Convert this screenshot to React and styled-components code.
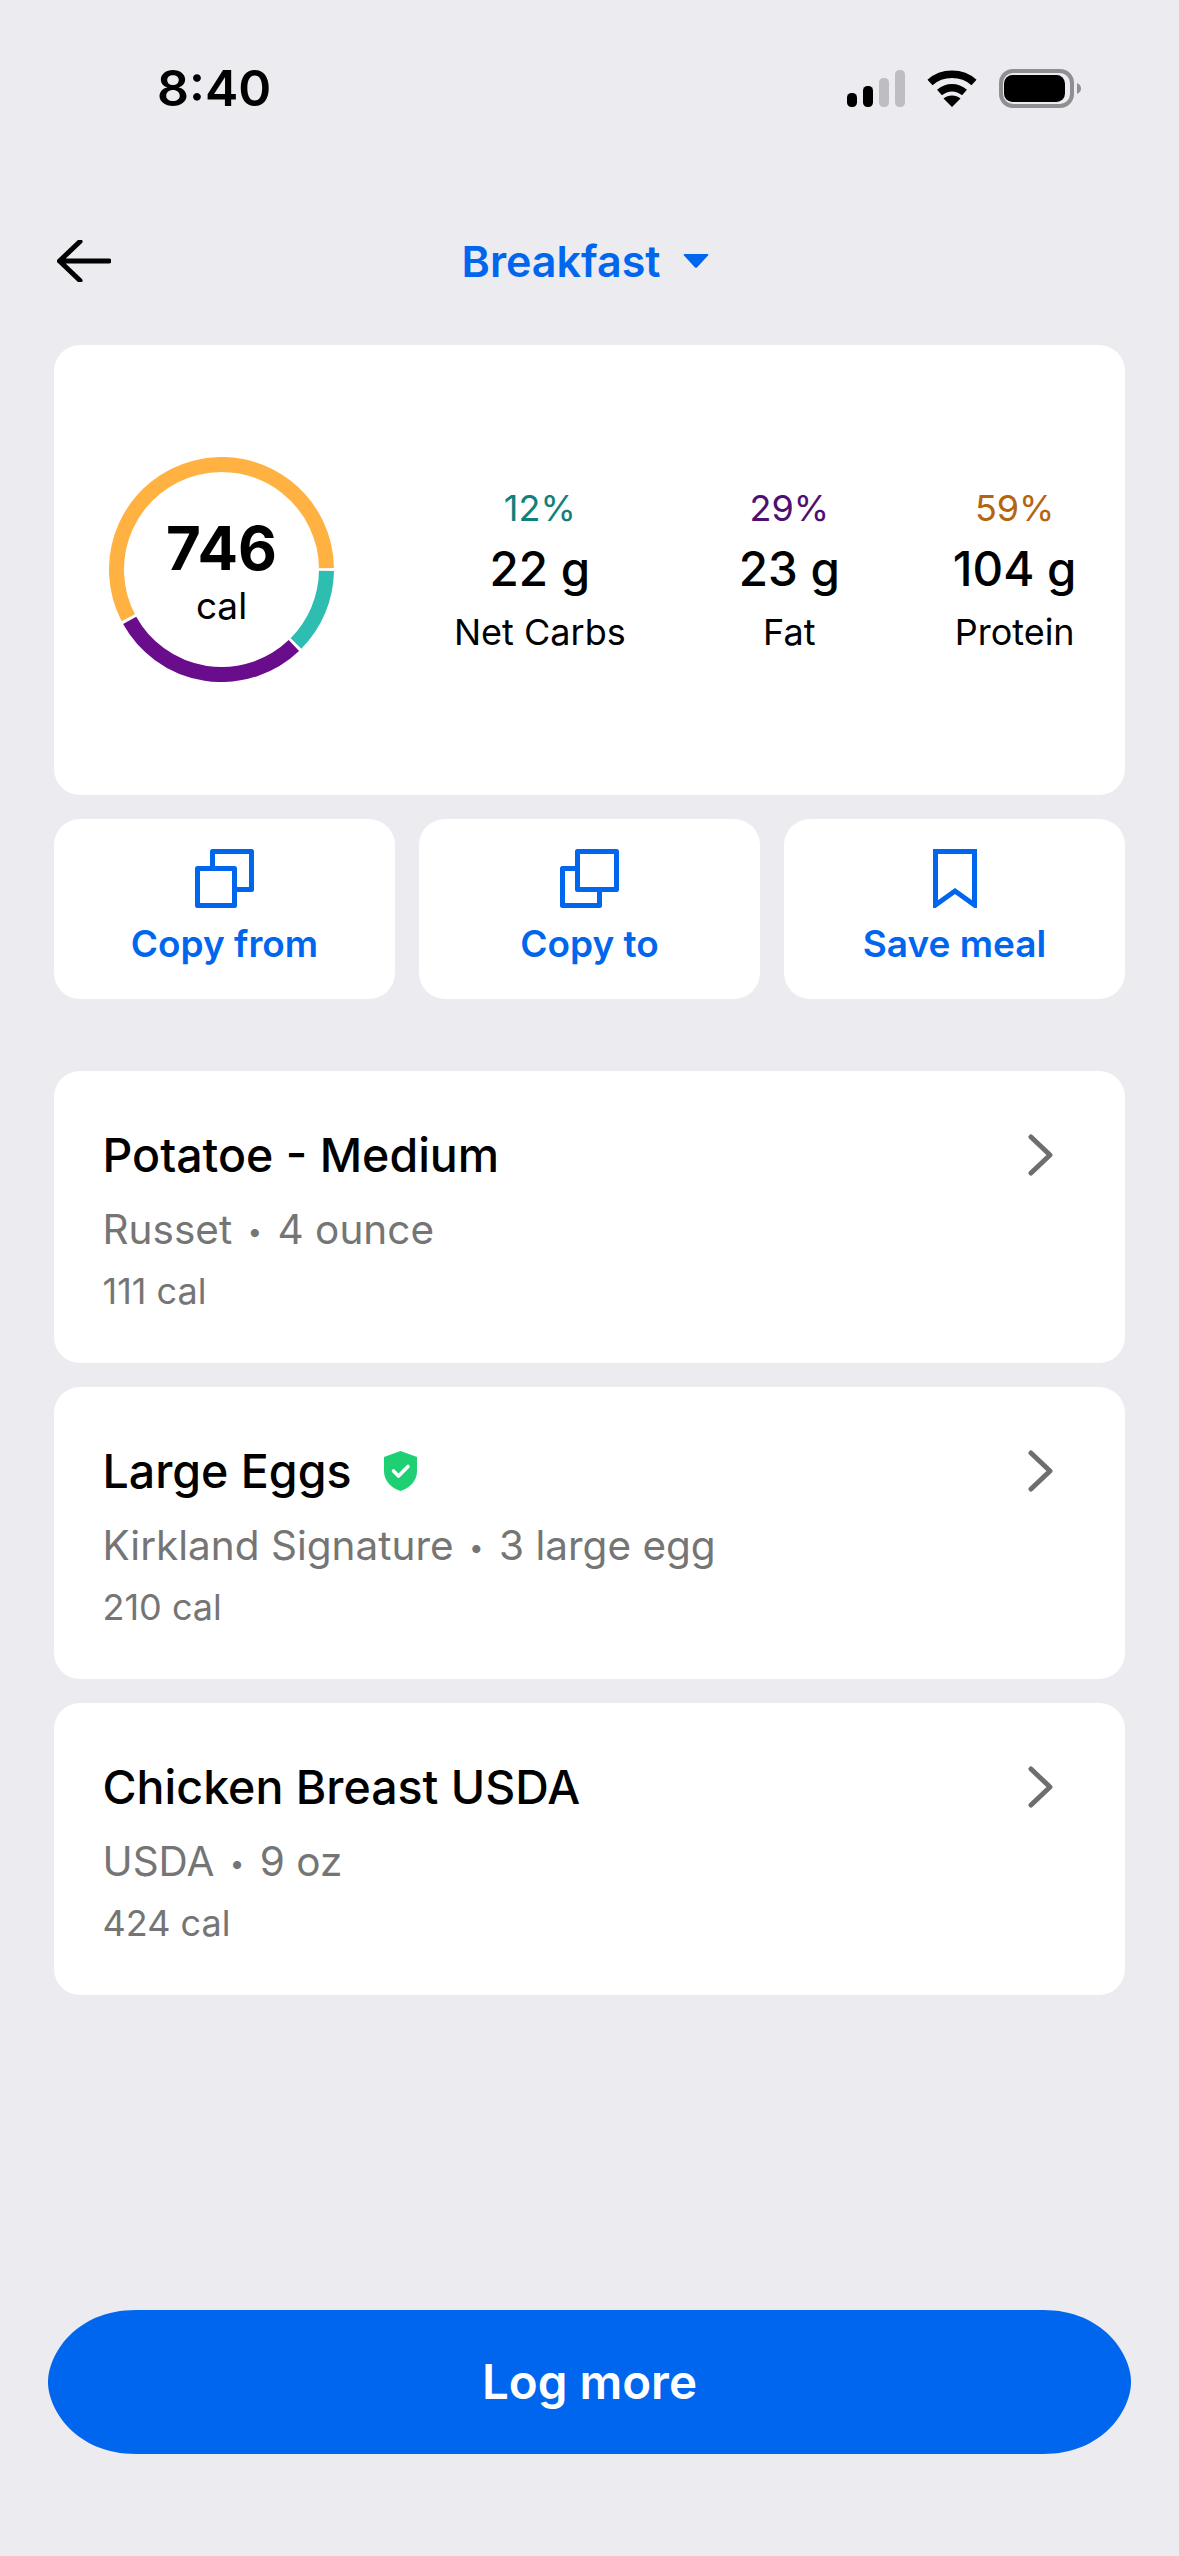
import React from "react";
import styled, { createGlobalStyle } from "styled-components";

const GlobalStyle = createGlobalStyle`
  html, body {
    margin: 0;
    padding: 0;
    background: #ebebf0;
  }
  * {
    box-sizing: border-box;
  }
`;

const Page = styled.div`
  width: 1179px;
  height: 2556px;
  display: flex;
  flex-direction: column;
  background: #ebebf0;
  color: #000;
  font-family: Inter, "Liberation Sans", sans-serif;
  overflow: hidden;
`;

const StatusBar = styled.div`
  display: flex;
  justify-content: space-between;
  align-items: center;
  height: 60px;
  margin-top: 58px;
  padding: 0 98px 0 157px;
`;

const Time = styled.div`
  font-size: 50px;
  line-height: 60px;
  font-weight: 600;
`;

const StatusIcons = styled.div`
  display: flex;
  align-items: center;
  gap: 22px;
`;

const Header = styled.header`
  display: grid;
  grid-template-columns: 1fr auto 1fr;
  align-items: center;
  height: 60px;
  margin-top: 113px;
  padding: 0 65px 0 57px;
`;

const HeaderTitle = styled.div`
  display: flex;
  align-items: center;
  gap: 23px;
  color: #0066ee;
  font-size: 43px;
  line-height: 60px;
  font-weight: 600;
`;

const Content = styled.main`
  display: flex;
  flex-direction: column;
  padding: 0 54px;
  margin-top: 54px;
`;

const SummaryCard = styled.section`
  display: flex;
  align-items: center;
  gap: 120px;
  height: 450px;
  padding-left: 55px;
  background: #fff;
  border-radius: 26px;
`;

const Ring = styled.div`
  display: grid;
  flex: none;
  width: 225px;
  height: 225px;
  margin-bottom: 1px;
  & > * {
    grid-area: 1 / 1;
  }
`;

const RingLabel = styled.div`
  display: flex;
  flex-direction: column;
  align-items: center;
  justify-content: center;
  padding-top: 2px;
`;

const Calories = styled.div`
  font-size: 60px;
  line-height: 66px;
  font-weight: 700;
`;

const CaloriesUnit = styled.div`
  font-size: 37px;
  line-height: 42px;
  margin-top: 4px;
`;

const Macros = styled.div`
  display: flex;
  gap: 113px;
  margin-bottom: 1px;
`;

const Macro = styled.div`
  display: flex;
  flex-direction: column;
  align-items: center;
`;

const MacroPercent = styled.div`
  font-size: 36px;
  line-height: 44px;
  color: ${(p) => p.$color};
`;

const MacroAmount = styled.div`
  font-size: 47.5px;
  line-height: 56px;
  font-weight: 500;
  margin-top: 11px;
  white-space: nowrap;
`;

const MacroName = styled.div`
  font-size: 36px;
  line-height: 42px;
  margin-top: 14px;
  white-space: nowrap;
`;

const Actions = styled.div`
  display: grid;
  grid-template-columns: repeat(3, 1fr);
  gap: 24px;
  margin-top: 24px;
`;

const ActionButton = styled.div`
  display: flex;
  flex-direction: column;
  align-items: center;
  height: 180px;
  padding-top: 30px;
  background: #fff;
  border-radius: 26px;
`;

const ActionLabel = styled.div`
  margin-top: 14px;
  color: #0066ee;
  font-size: 37px;
  line-height: 44px;
  font-weight: 600;
`;

const FoodList = styled.div`
  display: flex;
  flex-direction: column;
  gap: 24px;
  margin-top: 72px;
`;

const FoodCard = styled.article`
  display: flex;
  justify-content: space-between;
  align-items: flex-start;
  padding: 56px 72px 51px 48.5px;
  background: #fff;
  border-radius: 26px;
`;

const FoodBody = styled.div`
  display: flex;
  flex-direction: column;
`;

const FoodTitle = styled.div`
  display: flex;
  align-items: center;
  gap: 32px;
  font-size: 46.5px;
  line-height: 56px;
  font-weight: 500;
`;

const FoodMeta = styled.div`
  margin-top: 24px;
  color: #757575;
  font-size: 40.5px;
  line-height: 46px;
`;

const MetaDot = styled.span`
  font-size: 26px;
  line-height: 0;
  margin: 0 4px;
  vertical-align: 3px;
`;

const FoodCalories = styled.div`
  margin-top: 17px;
  color: #757575;
  font-size: 36px;
  line-height: 42px;
`;

const Chevron = styled.svg`
  flex: none;
  margin-top: 7px;
`;

const Footer = styled.footer`
  margin-top: auto;
  padding: 0 48px 102px;
`;

const LogButton = styled.div`
  display: flex;
  align-items: center;
  justify-content: center;
  height: 144px;
  padding-bottom: 2px;
  background: #0066ee;
  clip-path: path("M88 0 H995 C1055 0 1083 44 1083 72 C1083 100 1055 144 995 144 H88 C28 144 0 100 0 72 C0 44 28 0 88 0 Z");
  color: #fff;
  font-size: 47.5px;
  font-weight: 600;
`;

const SignalIcon = () => (
  <svg width="58" height="37" viewBox="0 0 58 37">
    <rect x="0" y="23" width="10" height="14" rx="4.5" fill="#000" />
    <rect x="16" y="16" width="10" height="21" rx="4.5" fill="#000" />
    <rect x="32" y="8" width="10" height="29" rx="4.5" fill="#bdbdc2" />
    <rect x="48" y="0" width="10" height="37" rx="4.5" fill="#bdbdc2" />
  </svg>
);

const WifiIcon = () => (
  <svg width="50" height="37" viewBox="0 0 50 37">
    <path d="M3 12.5 C15 1.5 35 1.5 47 12.5" fill="none" stroke="#000" strokeWidth="7.5" />
    <path d="M12.5 22.5 C20 16 30 16 37.5 22.5" fill="none" stroke="#000" strokeWidth="7.5" />
    <path d="M16.5 28.5 C21 24.5 29 24.5 33.5 28.5 L25 37 Z" fill="#000" />
  </svg>
);

const BatteryIcon = () => (
  <svg width="82" height="39" viewBox="0 0 82 39">
    <rect x="2" y="2" width="71" height="35" rx="12" fill="none" stroke="#8e8e93" strokeWidth="4" />
    <rect x="5" y="6" width="61" height="27" rx="8.5" fill="#000" />
    <path d="M78 14 C81 15.5 82 17.5 82 19.5 C82 21.5 81 23.5 78 25 Z" fill="#8e8e93" />
  </svg>
);

const BackArrow = () => (
  <svg width="54" height="42" viewBox="0 0 54 42">
    <path d="M23 1.5 L2.5 21 L23 40.5 M2.5 21 H52" fill="none" stroke="#000" strokeWidth="5" strokeLinecap="round" strokeLinejoin="round" />
  </svg>
);

const Caret = () => (
  <svg width="26" height="14" viewBox="0 0 26 14">
    <path d="M1.5 0 H24.5 Q26 0 25 1.5 L14.2 13.2 Q13 14.4 11.8 13.2 L1 1.5 Q0 0 1.5 0 Z" fill="#0066ee" />
  </svg>
);

const polar = (deg, r) => {
  const a = ((deg - 90) * Math.PI) / 180;
  return [112.5 + r * Math.cos(a), 112.5 + r * Math.sin(a)];
};

const arcPath = (from, to, r) => {
  const [x1, y1] = polar(from, r);
  const [x2, y2] = polar(to, r);
  return `M${x1} ${y1} A${r} ${r} 0 ${to - from > 180 ? 1 : 0} 1 ${x2} ${y2}`;
};

const ringSegments = [
  { from: 90.8, to: 134.8, color: "#2dbdb1" },
  { from: 136.4, to: 241, color: "#6a0d8c" },
  { from: 242.6, to: 449.2, color: "#ffb142" },
];

const MacroRing = () => (
  <svg width="225" height="225" viewBox="0 0 225 225">
    {ringSegments.map((s) => (
      <path key={s.color} d={arcPath(s.from, s.to, 105)} fill="none" stroke={s.color} strokeWidth="15" />
    ))}
  </svg>
);

const CopyIcon = ({ front }) => (
  <svg width="59" height="59" viewBox="0 0 59 59" fill="none" stroke="#0066ee" strokeWidth="5" strokeLinejoin="round">
    {front === "back" ? (
      <>
        <rect x="2.5" y="19.5" width="37" height="37" fill="none" />
        <rect x="17.5" y="2.5" width="39" height="38" fill="#fff" />
      </>
    ) : (
      <>
        <rect x="17.5" y="2.5" width="39" height="38" fill="none" />
        <rect x="2.5" y="19.5" width="37" height="37" fill="#fff" />
      </>
    )}
  </svg>
);

const BookmarkIcon = () => (
  <svg width="44" height="59" viewBox="0 0 44 59">
    <path d="M2.5 2.5 H41.5 V56 L22 42 L2.5 56 Z" fill="none" stroke="#0066ee" strokeWidth="5" strokeLinejoin="miter" />
  </svg>
);

const VerifiedShield = () => (
  <svg width="33" height="40" viewBox="0 0 33 40">
    <path d="M16.5 0 L33 6 V20 C33 31 25 37 16.5 40 C8 37 0 31 0 20 V6 Z" fill="#1fcf73" />
    <path d="M9.5 20 L14.5 25 L24 15.5" fill="none" stroke="#fff" strokeWidth="3.6" strokeLinecap="round" strokeLinejoin="round" />
  </svg>
);

const macros = [
  { percent: "12%", color: "#12807a", amount: "22 g", name: "Net Carbs" },
  { percent: "29%", color: "#4e0f70", amount: "23 g", name: "Fat" },
  { percent: "59%", color: "#b5650f", amount: "104 g", name: "Protein" },
];

const foods = [
  { title: "Potatoe - Medium", brand: "Russet", size: "4 ounce", calories: "111 cal" },
  { title: "Large Eggs", verified: true, brand: "Kirkland Signature", size: "3 large egg", calories: "210 cal" },
  { title: "Chicken Breast USDA", brand: "USDA", size: "9 oz", calories: "424 cal" },
];

const App = () => {
  return (
    <Page>
      <GlobalStyle />
      <StatusBar>
        <Time>8:40</Time>
        <StatusIcons>
          <SignalIcon />
          <WifiIcon />
          <BatteryIcon />
        </StatusIcons>
      </StatusBar>

      <Header>
        <BackArrow />
        <HeaderTitle>
          Breakfast
          <Caret />
        </HeaderTitle>
      </Header>

      <Content>
        <SummaryCard>
          <Ring>
            <MacroRing />
            <RingLabel>
              <Calories>746</Calories>
              <CaloriesUnit>cal</CaloriesUnit>
            </RingLabel>
          </Ring>
          <Macros>
            {macros.map((m) => (
              <Macro key={m.name}>
                <MacroPercent $color={m.color}>{m.percent}</MacroPercent>
                <MacroAmount>{m.amount}</MacroAmount>
                <MacroName>{m.name}</MacroName>
              </Macro>
            ))}
          </Macros>
        </SummaryCard>

        <Actions>
          <ActionButton>
            <CopyIcon front="front" />
            <ActionLabel>Copy from</ActionLabel>
          </ActionButton>
          <ActionButton>
            <CopyIcon front="back" />
            <ActionLabel>Copy to</ActionLabel>
          </ActionButton>
          <ActionButton>
            <BookmarkIcon />
            <ActionLabel>Save meal</ActionLabel>
          </ActionButton>
        </Actions>

        <FoodList>
          {foods.map((f) => (
            <FoodCard key={f.title}>
              <FoodBody>
                <FoodTitle>
                  {f.title}
                  {f.verified && <VerifiedShield />}
                </FoodTitle>
                <FoodMeta>
                  {f.brand} <MetaDot>•</MetaDot> {f.size}
                </FoodMeta>
                <FoodCalories>{f.calories}</FoodCalories>
              </FoodBody>
              <Chevron width="25" height="42" viewBox="0 0 25 42">
                <path d="M3 3 L22 21 L3 39" fill="none" stroke="#6e6e6e" strokeWidth="5" strokeLinecap="round" strokeLinejoin="round" />
              </Chevron>
            </FoodCard>
          ))}
        </FoodList>
      </Content>

      <Footer>
        <LogButton>Log more</LogButton>
      </Footer>
    </Page>
  );
};

export default App;
